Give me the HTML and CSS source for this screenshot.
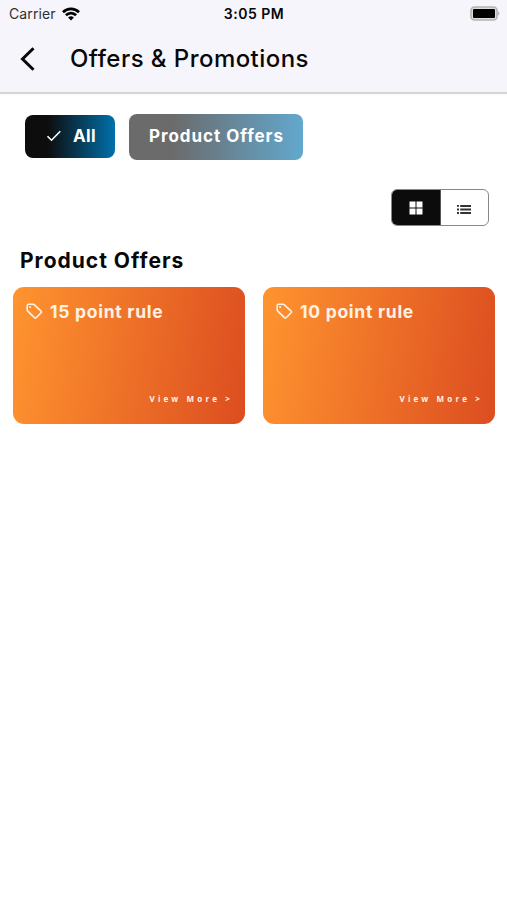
FILE: index.html
```html
<!DOCTYPE html>
<html lang="en">
<head>
<meta charset="utf-8">
<title>Offers &amp; Promotions</title>
<link rel="stylesheet" href="styles.css">
</head>
<body>
<header class="header">
  <div class="status">
    <div class="carrier"><span>Carrier</span>
      <svg width="18" height="14" viewBox="0 0 18 14"><g fill="none" stroke="#000" stroke-width="2.7"><path d="M1 5.2a11.4 11.4 0 0 1 16 0"/><path d="M3.9 8.3a7.2 7.2 0 0 1 10.2 0"/></g><path d="M9 13.5 6.1 10.6a4.1 4.1 0 0 1 5.8 0z"/></svg>
    </div>
    <span class="time">3:05 PM</span>
    <svg class="battery" width="31" height="15" viewBox="0 0 31 15"><rect x="1" y="1" width="26" height="13" rx="3.5" fill="#ddd" stroke="#b2b2b2" stroke-width="1.6"/><rect x="3" y="3" width="22" height="9" rx="1" fill="#000"/><path d="M28.2 5.2q2.5 2.3 0 4.6z" fill="#aaa"/></svg>
  </div>
  <div class="titlebar">
    <svg width="16" height="24" viewBox="0 0 16 24" fill="none" stroke="#080808" stroke-width="3"><path d="M13.5 1.2 2.5 12l11 10.8"/></svg>
    <h1>Offers &amp; Promotions</h1>
  </div>
</header>
<main>
  <nav class="filters">
    <button class="chip chip-active">
      <svg width="16" height="12" viewBox="0 0 16 12" fill="none" stroke="#fff" stroke-width="1.6"><path d="m1.5 6.2 4 4L14.3 1.3"/></svg>
      <span>All</span>
    </button>
    <button class="chip chip-muted"><span>Product Offers</span></button>
  </nav>
  <div class="toggle">
    <div class="toggle-item grid-on"><svg width="14" height="14" viewBox="0 0 14 14" fill="#fff"><path d="M.5.5h6v6h-6zM7.5.5h6v6h-6zM.5 7.5h6v6h-6zM7.5 7.5h6v6h-6z"/></svg></div>
    <div class="toggle-item"><svg width="14" height="9" viewBox="0 0 14 9" fill="#333"><path d="M0 0h2v1.8H0zM3.2 0H14v2H3.2zM0 3.6h2v1.8H0zM3.2 3.5H14v2H3.2zM0 7.1h2v1.8H0zM3.2 7H14v2H3.2z"/></svg></div>
  </div>
  <h2>Product Offers</h2>
  <section class="cards">
    <article class="card">
      <div class="card-title"><svg width="17" height="17" viewBox="0 0 17 17" fill="none" stroke="#fff2e5" stroke-width="1.6" stroke-linejoin="round"><path d="M1.2 2.4q0-1.2 1.2-1.2h4.7q.6 0 1 .4l7 6.5q.8.8 0 1.6l-5 5q-.8.8-1.6 0L1.7 8.2q-.5-.5-.5-1.1z"/><circle cx="4.1" cy="4.1" r="1" fill="#fff2e5" stroke="none"/></svg><span>15 point rule</span></div>
      <div class="more">View More &gt;</div>
    </article>
    <article class="card">
      <div class="card-title"><svg width="17" height="17" viewBox="0 0 17 17" fill="none" stroke="#fff2e5" stroke-width="1.6" stroke-linejoin="round"><path d="M1.2 2.4q0-1.2 1.2-1.2h4.7q.6 0 1 .4l7 6.5q.8.8 0 1.6l-5 5q-.8.8-1.6 0L1.7 8.2q-.5-.5-.5-1.1z"/><circle cx="4.1" cy="4.1" r="1" fill="#fff2e5" stroke="none"/></svg><span>10 point rule</span></div>
      <div class="more">View More &gt;</div>
    </article>
  </section>
</main>
</body>
</html>
```
FILE: styles.css
```css
* { box-sizing: border-box; }
body { margin: 0; background: #fff; color: #080808; font-family: Inter, "Liberation Sans", sans-serif; }
svg { display: block; flex: none; }
h1, h2 { margin: 0; white-space: nowrap; }
.header { height: 93px; background: #f6f5fb; border-bottom: 1px solid #d2d2d4; box-shadow: 0 1px 1px #d8d8da; }
.status { display: grid; grid-template-columns: 1fr auto 1fr; align-items: center; height: 27px; padding: 0 6px 0 7px; }
.carrier { display: flex; align-items: center; gap: 6px; padding-left: 2px; font-size: 14px; color: #303033; letter-spacing: .1px; }
.time { font-size: 14px; font-weight: 600; letter-spacing: .5px; }
.battery { justify-self: end; }
.titlebar { display: flex; align-items: center; gap: 34px; height: 64px; padding-left: 20px; }
h1 { font-size: 24px; line-height: 30px; font-weight: 450; letter-spacing: .45px; }
.filters { display: flex; align-items: flex-start; gap: 14px; padding: 21px 25px 0; }
.chip { display: flex; align-items: center; justify-content: center; border: 0; padding: 0; border-radius: 8px; color: #fff; font: 650 17px/22px Inter, sans-serif; letter-spacing: .95px; white-space: nowrap; }
.chip-active { width: 90px; height: 43px; margin-top: 1px; padding: 0 0 1px 2px; gap: 11px; letter-spacing: .4px; background: linear-gradient(90deg, #0d0d0d 25%, #0070ab); }
.chip-muted { width: 174px; height: 46px; padding: 0 0 2px 1px; background: linear-gradient(90deg, #6b6b6b 25%, #62a8ce); }
.toggle { display: flex; width: 98px; height: 37px; margin: 29px 18px 0 auto; border: 1px solid #888; border-radius: 6px; overflow: hidden; }
.toggle-item { flex: 1; display: flex; align-items: center; justify-content: center; }
.toggle-item:last-child { padding-top: 4px; }
.grid-on { background: #0c0c0c; border-right: 1px solid #555; }
h2 { margin: 21px 0 0 20px; font-size: 21px; line-height: 27px; font-weight: 650; letter-spacing: 1px; }
.cards { display: grid; grid-template-columns: 1fr 1fr; gap: 18px; padding: 13px 12px 0 13px; }
.card { display: flex; flex-direction: column; justify-content: space-between; height: 137px; padding: 13px 12px 19px 13px; border-radius: 11px; color: #fff2e5; background: linear-gradient(98deg, #ff942f, #dc4d20); }
.card-title { display: flex; align-items: center; gap: 7px; font-size: 17.5px; line-height: 23px; font-weight: 650; letter-spacing: .72px; white-space: nowrap; }
.more { align-self: flex-end; font: 700 8px/12px "Open Sans", sans-serif; letter-spacing: 3.15px; white-space: nowrap; }
```
